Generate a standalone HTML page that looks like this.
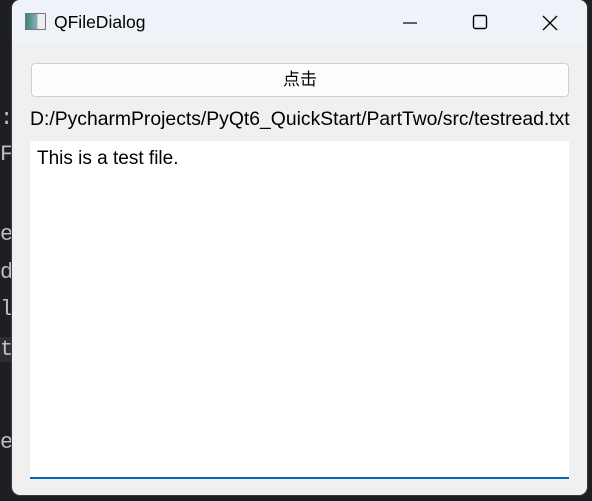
<!DOCTYPE html>
<html><head><meta charset="utf-8"><style>
body{margin:0;width:592px;height:501px;background:#1e1f22;position:relative;overflow:hidden;font-family:"Liberation Sans","Noto Sans CJK SC",sans-serif}
.code{position:absolute;left:0;color:#bcbec4;font-family:"Liberation Mono",monospace;font-size:22px}
.win{position:absolute;left:12px;top:0;width:575px;height:495px;background:#f0f0f0;border-radius:8px;overflow:hidden;box-shadow:0 0 0 1px #3a3a3a}
.tb{height:45px;background:#eff3f9;position:relative}
.tb .t{position:absolute;left:42px;top:12px;font-size:17.5px;color:#000}
.icon{position:absolute;left:13px;top:13px;width:19px;height:15px;border:1px solid #777;background:linear-gradient(90deg,#3a8a6a,#8ab0c8 60%,#eee 60%)}
.btn{position:absolute;left:19px;top:63px;width:536px;height:32px;background:#fdfdfd;border:1px solid #d0d0d0;border-radius:4px;text-align:center;line-height:32px;font-size:17px}
.lbl{position:absolute;left:18px;top:108px;font-size:19.35px;color:#000;white-space:nowrap}
.te{position:absolute;left:18px;top:141px;width:539px;height:336px;background:#fff;border-bottom:2px solid #0067c0;box-sizing:content-box}
.te span{position:absolute;left:7px;top:7px;font-size:19px}
</style></head><body>
<div class="code" style="top:106px">:</div>
<div class="code" style="top:142px">F</div>
<div class="code" style="top:222px">e</div>
<div class="code" style="top:260px">d</div>
<div class="code" style="top:297px">l</div>
<div class="code" style="top:337px;background:#2b2d30;width:12px">t</div>
<div class="code" style="top:430px">e</div>
<div class="win">
<div class="tb"><div class="icon"></div><div class="t">QFileDialog</div>
<svg style="position:absolute;left:385px;top:12px" width="180" height="22" viewBox="0 0 180 22">
<line x1="6" y1="11" x2="20" y2="11" stroke="#000" stroke-width="1.2"/>
<rect x="76.5" y="3.5" width="13" height="13" rx="2" fill="none" stroke="#000" stroke-width="1.4"/>
<path d="M146 4L160 18M160 4L146 18" stroke="#000" stroke-width="1.3"/>
</svg></div>
<div class="btn">点击</div>
<div class="lbl">D:/PycharmProjects/PyQt6_QuickStart/PartTwo/src/testread.txt</div>
<div class="te"><span>This is a test file.</span></div>
</div>
</body></html>
